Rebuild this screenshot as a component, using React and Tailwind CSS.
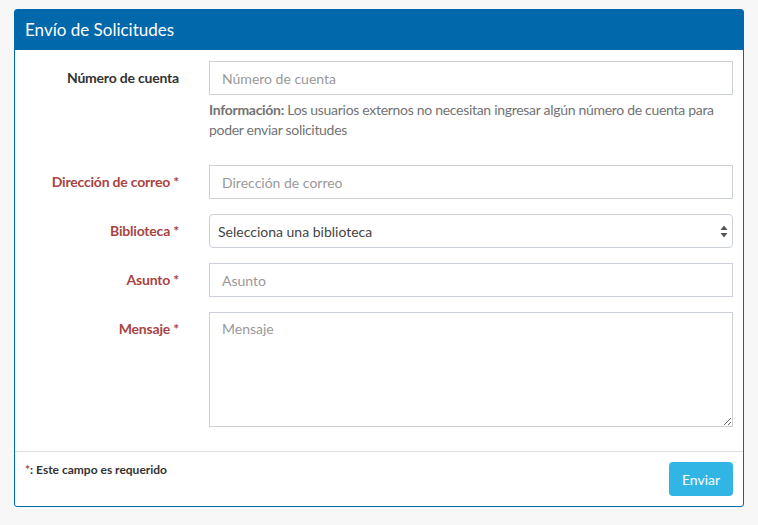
export default function App() {
  const font = { fontFamily: '"Source Sans Pro", Lato, "Noto Sans", sans-serif' };
  const inputCls =
    "block w-full h-[34px] border border-[#ccd0d9] bg-white px-3 text-[14px] text-[#555] placeholder:text-[#999] outline-none";
  const labelCls =
    "w-[179px] shrink-0 pr-[15px] pt-[7px] text-right text-[14px] leading-[20px] font-bold tracking-[-0.2px]";
  return (
    <div className="min-h-[525px] w-[758px] bg-[#f7f7f7] pt-[9px] pl-[14px]" style={font}>
      <div className="w-[730px] rounded-[3px] border border-[#0068ab] bg-white">
        <div className="flex h-[40px] items-center bg-[#0068ab] px-[10px] text-[17px] text-white">
          Envío de Solicitudes
        </div>
        <div className="flex flex-col gap-[15px] pt-[11px] pr-[10px]">
          <div className="flex">
            <div className={labelCls + " text-[#333]"}>Número de cuenta</div>
            <div className="ml-[15px] flex-1">
              <input className={inputCls + " border-[#0068ab]"} placeholder="Número de cuenta" autoFocus />
              <p className="mt-[5px] mb-[10px] text-[14px] leading-[20px] tracking-[-0.3px] text-[#737373]">
                <b className="font-bold">Información:</b> Los usuarios externos no necesitan ingresar algún número de cuenta para poder enviar solicitudes
              </p>
            </div>
          </div>
          <div className="flex">
            <div className={labelCls + " text-[#a94442]"}>Dirección de correo *</div>
            <div className="ml-[15px] flex-1">
              <input className={inputCls} placeholder="Dirección de correo" />
            </div>
          </div>
          <div className="flex">
            <div className={labelCls + " text-[#a94442]"}>Biblioteca *</div>
            <div className="ml-[15px] flex-1">
              <div className="relative flex h-[34px] w-full items-center rounded-[4px] border border-[#ccd0d9] bg-white pl-[8px] text-[14px] text-[#444]">
                Selecciona una biblioteca
                <svg className="absolute right-[4px] top-[10px]" width="8" height="13" viewBox="0 0 8 13">
                  <path d="M4 0.5 L7.5 5 L0.5 5 Z" fill="#555" />
                  <path d="M4 12.5 L7.5 8 L0.5 8 Z" fill="#555" />
                </svg>
              </div>
            </div>
          </div>
          <div className="flex">
            <div className={labelCls + " text-[#a94442]"}>Asunto *</div>
            <div className="ml-[15px] flex-1">
              <input className={inputCls} placeholder="Asunto" />
            </div>
          </div>
          <div className="flex">
            <div className={labelCls + " text-[#a94442]"}>Mensaje *</div>
            <div className="ml-[15px] flex-1">
              <textarea
                className="block h-[115px] w-full border border-[#ccd0d9] bg-white px-3 py-[6px] text-[14px] leading-[20px] text-[#555] placeholder:text-[#999] outline-none"
                placeholder="Mensaje"
              />
            </div>
          </div>
        </div>
        <div className="mt-[24px] flex items-start justify-between border-t border-[#dddddd] pt-[10px] pb-[10px] pl-[10px] pr-[10px]">
          <div className="pt-[1px] text-[12px] leading-[14px] font-bold text-[#333]">
            <span className="text-[#a94442]">*</span>: Este campo es requerido
          </div>
          <button className="h-[34px] w-[64px] rounded-[4px] bg-[#31b5e5] text-[14px] text-white">Enviar</button>
        </div>
      </div>
    </div>
  );
}
